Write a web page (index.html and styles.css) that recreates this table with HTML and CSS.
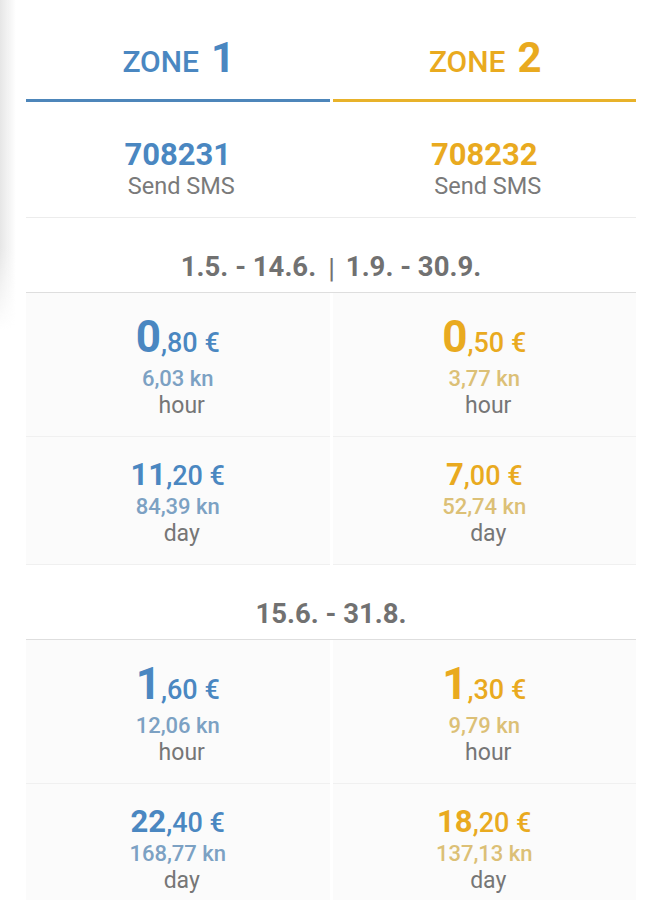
FILE: index.html
```html
<!DOCTYPE html>
<html lang="en">
<head>
<meta charset="utf-8">
<title>Parking zones</title>
<link rel="stylesheet" href="styles.css">
</head>
<body>
<div class="page">
  <div class="shade"></div>

  <div class="grid head">
    <div class="zone z1"><span class="zone-word">ZONE</span><span class="zone-num">1</span></div>
    <div class="zone z2"><span class="zone-word">ZONE</span><span class="zone-num">2</span></div>
  </div>

  <div class="grid sms">
    <div class="sms-cell z1"><div class="sms-num">708231</div><div class="sms-label">Send SMS</div></div>
    <div class="sms-cell z2"><div class="sms-num">708232</div><div class="sms-label">Send SMS</div></div>
  </div>

  <div class="period">1.5. - 14.6.<span class="sep">|</span>1.9. - 30.9.</div>

  <div class="grid prices">
    <div class="cell hour z1"><div class="eur"><span class="int">0</span><span class="dec">,80 €</span></div><div class="kn">6,03 kn</div><div class="unit">hour</div></div>
    <div class="cell hour z2"><div class="eur"><span class="int">0</span><span class="dec">,50 €</span></div><div class="kn">3,77 kn</div><div class="unit">hour</div></div>
    <div class="cell day z1"><div class="eur"><span class="int">11</span><span class="dec">,20 €</span></div><div class="kn">84,39 kn</div><div class="unit">day</div></div>
    <div class="cell day z2"><div class="eur"><span class="int">7</span><span class="dec">,00 €</span></div><div class="kn">52,74 kn</div><div class="unit">day</div></div>
  </div>

  <div class="period">15.6. - 31.8.</div>

  <div class="grid prices">
    <div class="cell hour z1"><div class="eur"><span class="int">1</span><span class="dec">,60 €</span></div><div class="kn">12,06 kn</div><div class="unit">hour</div></div>
    <div class="cell hour z2"><div class="eur"><span class="int">1</span><span class="dec">,30 €</span></div><div class="kn">9,79 kn</div><div class="unit">hour</div></div>
    <div class="cell day z1"><div class="eur"><span class="int">22</span><span class="dec">,40 €</span></div><div class="kn">168,77 kn</div><div class="unit">day</div></div>
    <div class="cell day z2"><div class="eur"><span class="int">18</span><span class="dec">,20 €</span></div><div class="kn">137,13 kn</div><div class="unit">day</div></div>
  </div>
</div>
</body>
</html>
```

FILE: styles.css
```css
html, body {
  margin: 0;
  padding: 0;
  background: #ffffff;
}

body {
  font-family: Roboto, "Noto Sans", "Liberation Sans", sans-serif;
  overflow-x: hidden;
}

.page {
  position: relative;
  width: 661px;
  min-height: 900px;
}

.shade {
  position: absolute;
  left: 0;
  top: 0;
  width: 16px;
  height: 330px;
  background: linear-gradient(to right, #e6e6e6, rgba(255, 255, 255, 0));
  -webkit-mask-image: linear-gradient(to bottom, #000 75%, transparent);
  mask-image: linear-gradient(to bottom, #000 75%, transparent);
  pointer-events: none;
}

.grid {
  display: grid;
  grid-template-columns: 1fr 1fr;
  column-gap: 3px;
  margin: 0 25px 0 26px;
}

.z1 { color: #4a87c1; }
.z2 { color: #e9aa1f; }

/* zone headers */
.zone {
  text-align: center;
  padding: 37px 0 20px;
  line-height: 1;
  border-bottom: 3px solid currentColor;
}
.zone.z1 { border-bottom-color: #4d86ba; }
.zone.z2 { border-bottom-color: #e8b22a; }

.zone-word {
  font-size: 30px;
  font-weight: 500;
  padding-left: 2px;
}
.zone-num {
  font-size: 42px;
  font-weight: 700;
  margin-left: 12px;
}

/* sms numbers */
.sms {
  border-bottom: 1px solid #ececec;
}
.sms-cell {
  text-align: center;
  padding: 37px 0 15px;
}
.sms-num {
  font-size: 31px;
  font-weight: 700;
  line-height: 32px;
}
.sms-label {
  font-size: 23.5px;
  line-height: 31px;
  color: #7a7a7a;
  padding-left: 7px;
}

/* period headers */
.period {
  margin: 0 25px 0 26px;
  padding: 32px 0 8px;
  text-align: center;
  font-size: 27.5px;
  line-height: 34px;
  font-weight: 700;
  color: #717171;
  border-bottom: 1px solid #dedede;
}
.sep {
  font-weight: 400;
  margin: 0 11px 0 12px;
  position: relative;
  top: 2px;
}

/* price cells */
.cell {
  background: #fbfbfb;
  text-align: center;
  padding: 22px 0 17px;
  border-bottom: 1px solid #f0f0f0;
}
.eur {
  line-height: 1;
}
.int {
  font-weight: 700;
}
.dec {
  font-size: 27px;
  font-weight: 500;
}
.hour .int { font-size: 44px; }
.day .int { font-size: 31px; }

.kn {
  font-size: 22px;
  font-weight: 500;
  line-height: 26px;
}
.hour .kn { margin-top: 7px; }
.day .kn { margin-top: 4px; }
.z1 .kn { color: #7ca1c3; }
.z2 .kn { color: #dcc076; }

.unit {
  font-size: 23px;
  line-height: 27px;
  color: #767676;
  padding-left: 8px;
}
```
